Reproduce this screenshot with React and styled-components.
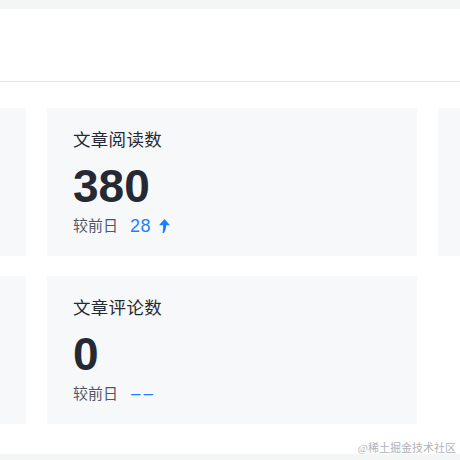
import React from 'react';
import styled, { createGlobalStyle } from 'styled-components';

const GlobalStyle = createGlobalStyle`
  html, body {
    margin: 0;
    padding: 0;
    background: #ffffff;
    font-family: "Liberation Sans", "Noto Sans CJK SC", sans-serif;
  }
`;

// side cards are only partly in view, so they are left blank
const stats = [
  null,
  { title: '文章阅读数', value: '380', diff: '28' },
  null,
  null,
  { title: '文章评论数', value: '0', diff: null },
];

const UpArrow = () => (
  <svg width="11" height="14" viewBox="0 0 11 14">
    <path d="M5.5 0 L11 6.2 L7.3 6.2 C7.1 9.3 6.3 11.8 4.9 14 L3.4 14 C4 11.6 4.2 9.1 4.1 6.2 L0 6.2 Z" fill="#1e80ff" />
  </svg>
);

const App = () => {
  return (
    <Page>
      <GlobalStyle />
      <TopBand />
      <Header />
      <Grid>
        {stats.map((s, i) =>
          s ? (
            <Card key={i}>
              <Title>{s.title}</Title>
              <Value>{s.value}</Value>
              <Compare>
                较前日
                {s.diff ? (
                  <Diff>
                    {s.diff}
                    <UpArrow />
                  </Diff>
                ) : (
                  <Dash>––</Dash>
                )}
              </Compare>
            </Card>
          ) : (
            <Card key={i} />
          )
        )}
      </Grid>
      <BottomBand />
      <Watermark>@稀土掘金技术社区</Watermark>
    </Page>
  );
};

const Page = styled.div`
  position: relative;
  width: 460px;
  height: 460px;
  overflow: hidden;
  background: #ffffff;
`;

const TopBand = styled.div`
  height: 9px;
  background: #f4f5f5;
`;

const Header = styled.div`
  height: 72px;
  background: #ffffff;
  border-bottom: 1px solid #e4e6eb;
`;

const Grid = styled.div`
  display: grid;
  grid-template-columns: repeat(3, 370px);
  grid-auto-rows: 148px;
  column-gap: 21px;
  row-gap: 20px;
  margin: 26px 0 0 -344px;
  height: 316px;
`;

const Card = styled.div`
  background: #f7f8fa;
  padding: 20px 26px 0;
  display: flex;
  flex-direction: column;
`;

const Title = styled.div`
  font-size: 17.5px;
  line-height: 24px;
  color: #252933;
  letter-spacing: 0.3px;
`;

const Value = styled.div`
  font-size: 46px;
  font-weight: bold;
  line-height: 50px;
  margin-top: 9px;
  color: #252933;
`;

const Compare = styled.div`
  display: flex;
  align-items: center;
  font-size: 15px;
  line-height: 24px;
  margin-top: 3px;
  color: #515767;
`;

const Diff = styled.span`
  display: inline-flex;
  align-items: center;
  gap: 8px;
  margin-left: 12px;
  font-size: 18px;
  color: #1e80ff;
  letter-spacing: 0.5px;
`;

const Dash = styled.span`
  margin-left: 13px;
  font-size: 17px;
  color: #1e80ff;
  letter-spacing: 3px;
`;

const BottomBand = styled.div`
  margin-top: 30px;
  height: 8px;
  background: #f4f5f5;
`;

const Watermark = styled.div`
  position: absolute;
  right: 4px;
  bottom: 5px;
  font-family: "Liberation Serif", "Noto Sans CJK SC", serif;
  font-size: 11px;
  color: #b0b3b8;
`;

export default App;
